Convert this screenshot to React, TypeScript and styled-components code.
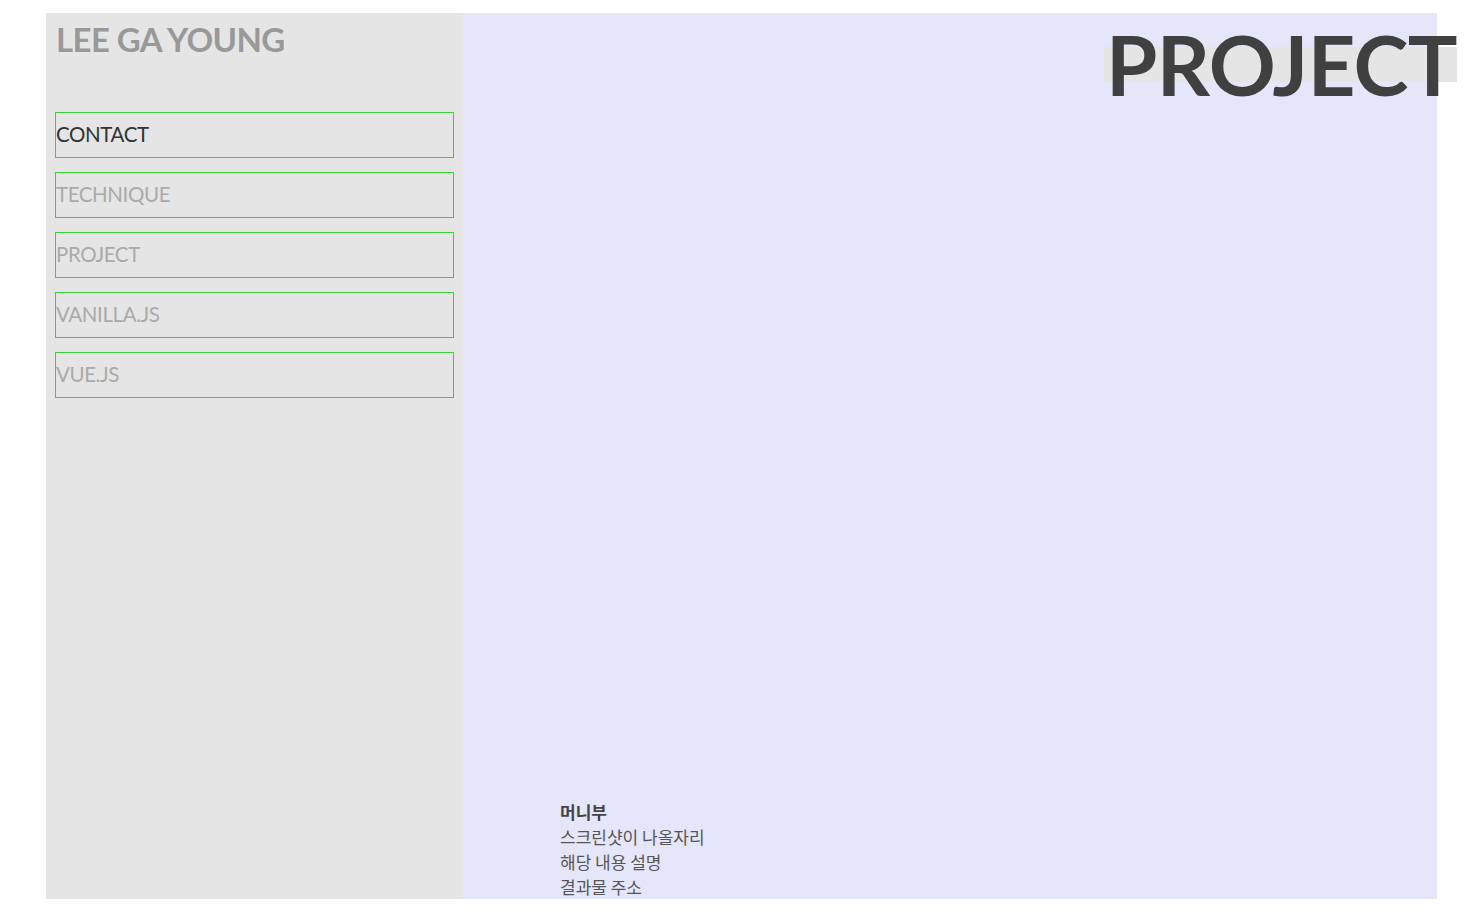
import React from 'react';
import styled, { createGlobalStyle } from 'styled-components';

const menu = ['CONTACT', 'TECHNIQUE', 'PROJECT', 'VANILLA.JS', 'VUE.JS'];

export default function App() {
  return (
    <>
      <GlobalStyle />
      <Page>
        <Sidebar>
          <Name>LEE GA YOUNG</Name>
          <Nav>
            {menu.map((item, i) => (
              <NavItem key={item} active={i === 0}>
                {item}
              </NavItem>
            ))}
          </Nav>
        </Sidebar>
        <Main>
          <TitleRow>
            <Title>PROJECT</Title>
          </TitleRow>
          <Card>
            <CardName>머니부</CardName>
            <CardLine>스크린샷이 나올자리</CardLine>
            <CardLine>해당 내용 설명</CardLine>
            <CardLine>결과물 주소</CardLine>
          </Card>
        </Main>
      </Page>
    </>
  );
}

const GlobalStyle = createGlobalStyle`
  body {
    margin: 0;
    background: #fff;
    font-family: Lato, "Noto Sans CJK KR", sans-serif;
  }
`;

const Page = styled.div`
  display: flex;
  height: 886px;
  margin: 13px 34px 0 46px;
`;

const Sidebar = styled.aside`
  width: 417px;
  flex-shrink: 0;
  background: #e5e5e5;
  padding: 0 9px;
  box-sizing: border-box;
`;

const Name = styled.h2`
  margin: 0;
  padding: 8px 0 0 1px;
  font-family: Lato, sans-serif;
  font-size: 33px;
  font-weight: 700;
  line-height: 36px;
  letter-spacing: -0.6px;
  color: #999;
`;

const Nav = styled.ul`
  list-style: none;
  margin: 55px 0 0;
  padding: 0;
  display: flex;
  flex-direction: column;
  gap: 14px;
`;

const NavItem = styled.li<{ active?: boolean }>`
  height: 46px;
  border: 1px solid #3ad03a;
  box-sizing: border-box;
  display: flex;
  align-items: center;
  padding-bottom: 2px;
  font-size: 20.5px;
  color: ${({ active }) => (active ? '#333' : '#aaa')};
  letter-spacing: -0.4px;
`;

const Main = styled.main`
  flex: 1;
  background: #e6e6fa;
  display: flex;
  flex-direction: column;
  padding-left: 97px;
`;

const TitleRow = styled.div`
  display: flex;
  justify-content: flex-end;
  margin-right: -20px;
  padding-top: 34px;
`;

const Title = styled.h1`
  margin: 0;
  background: #e5e5e5;
  height: 35px;
  line-height: 35px;
  padding-left: 2px;
  font-family: Lato, sans-serif;
  font-size: 83px;
  font-weight: 700;
  color: #404040;
  letter-spacing: -0.6px;
`;

const Card = styled.div`
  margin-top: auto;
  font-family: "Noto Sans CJK KR", sans-serif;
  font-size: 17px;
  line-height: 25px;
  color: #555;
`;

const CardName = styled.div`
  font-weight: 700;
  color: #444;
`;

const CardLine = styled.div``;
